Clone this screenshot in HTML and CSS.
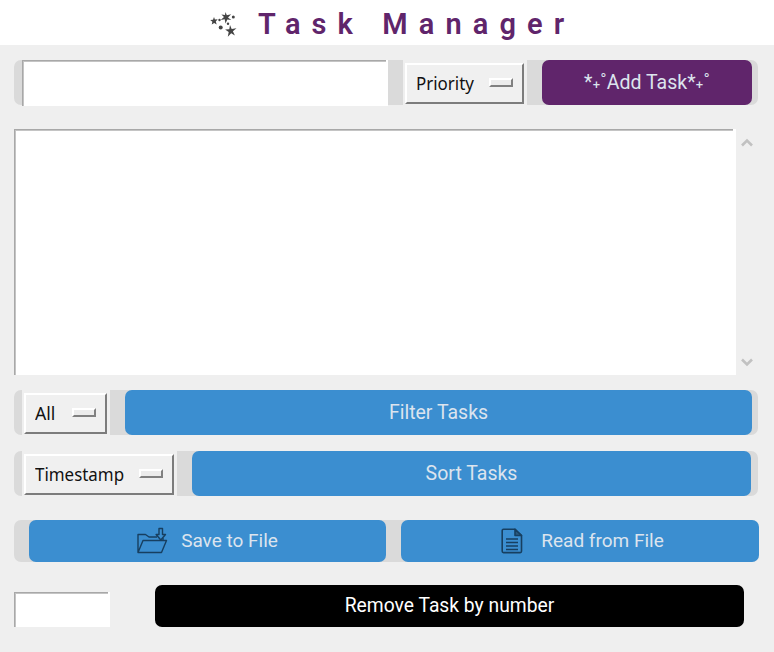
FILE: index.html
```
<!DOCTYPE html>
<html lang="en">
<head>
<meta charset="utf-8">
<title>Task Manager</title>
<link rel="stylesheet" href="styles.css">
</head>
<body>
<header class="header">
  <svg class="stars" width="28" height="28" viewBox="0 0 28 28" fill="#444">
    <path d="M15.500 1l1.300 3.300 4.400-1.100-3.200 3.200 3.300 2.600-4-.6-1.800 4.200-.8-4.300-4 .8 3.300-3-2.600-2.600 3.600.6z"/>
    <path d="M20 14l1.700 4 4.800-.8-3.600 3.100 2 4.300-3.700-2.300-3.400 3.400.9-4.700-3.600-2.400 4.200-.4z"/>
    <path d="M4 6l.9 2.500 2.800-.2-1.900 2.100.9 3-2.500-1.500-2.500 1.700.7-2.900L.2 9l2.800-.3z"/>
    <circle cx="23.300" cy="5.900" r="1.500"/><circle cx="9.500" cy="9" r="1.200"/><circle cx="10.700" cy="16.500" r="2"/><circle cx="18" cy="12.800" r="1.200"/>
  </svg>
  <h1 class="title">Task Manager</h1>
</header>
<main class="main">
  <div class="bar">
    <input class="entry entry-task" aria-label="Task">
    <div class="slot slot-priority"><button class="menu"><span class="label label-priority">Priority</span><i class="knob"></i></button></div>
    <button class="btn add"><span class="spark">*<span class="plus">₊</span>˚</span><span>Add Task</span><span class="spark">*<span class="plus">₊</span>˚</span></button>
  </div>
  <div class="list">
    <div class="listbox"></div>
    <div class="scroll">
      <svg width="12" height="9" viewBox="0 0 12 9"><path d="M1 7.500L6 2.500l5 5" fill="none" stroke="#c1c1c1" stroke-width="2.600"/></svg>
      <svg width="12" height="9" viewBox="0 0 12 9"><path d="M1 1.500l5 5 5-5" fill="none" stroke="#c1c1c1" stroke-width="2.600"/></svg>
    </div>
  </div>
  <div class="bar bar-filter">
    <div class="slot slot-all"><button class="menu"><span class="label label-all">All</span><i class="knob"></i></button></div>
    <button class="btn filter">Filter Tasks</button>
  </div>
  <div class="bar bar-sort">
    <div class="slot slot-time"><button class="menu"><span class="label label-time">Timestamp</span><i class="knob"></i></button></div>
    <button class="btn sort">Sort Tasks</button>
  </div>
  <div class="bar bar-files">
    <button class="btn save">
      <svg width="32" height="28" viewBox="0 0 32 28" fill="none" stroke="#173f60" stroke-width="1.400" stroke-linejoin="round">
        <path d="M2 25.500V7.500h7.500l3.500 2.500h8M27 11v2.500M2 25.500l5-12h23.500l-5 12z"/>
        <path d="M23 1.500h3.500v6h3l-4.700 5.500-4.700-5.500H23z"/>
      </svg>
      <span>Save to File</span>
    </button>
    <button class="btn read">
      <svg width="22" height="26" viewBox="0 0 22 26" fill="none" stroke="#173f60" stroke-width="1.600" stroke-linejoin="round">
        <path d="M2.500 1.200H14l6.500 6.300v15.800a1.300 1.300 0 0 1-1.300 1.300H2.500a1.300 1.300 0 0 1-1.300-1.300V2.500a1.300 1.300 0 0 1 1.300-1.300z"/>
        <path d="M14 1.200v6.300h6.500z" fill="#28597f"/>
        <path d="M5 11h12M5 14.500h12M5 18h12M5 21.500h12"/>
      </svg>
      <span>Read from File</span>
    </button>
  </div>
  <div class="remove-row">
    <input class="entry entry-number" aria-label="Task number">
    <button class="btn remove">Remove Task by number</button>
  </div>
</main>
</body>
</html>
```
FILE: styles.css
```
* { box-sizing: border-box; }
body { margin: 0; background: #efefef; font-family: Roboto, sans-serif; height: 652px; overflow: hidden; }
button { font: inherit; border: 0; padding: 0; margin: 0; }
.header { height: 45px; background: #fff; display: flex; padding-left: 210px; }
.stars { margin-top: 11px; flex: none; }
.title { margin: 0 0 0 20px; font-size: 29px; line-height: 48px; font-weight: 600; letter-spacing: 11.1px; color: #60256b; white-space: nowrap; }
.main { padding: 15px 15px 0 14px; }
.bar { display: flex; width: 744px; height: 45px; background: #dadada; border-radius: 7px; padding-left: 8px; }
.entry { display: block; background: #fff; border: 0; border-right: 2px solid #fff; border-radius: 0; padding: 0 6px; margin: 0; outline: 0; box-shadow: inset 1px 1px #a8a8a8, inset 2px 2px #c4c4c4; }
.entry-task { width: 366px; height: 46px; margin-right: 15px; }
.slot { background: #efefef; height: 46px; padding: 3px 3px 2px 2px; margin-right: 15px; flex: none; }
.slot-priority { width: 124px; }
.slot-all { width: 88px; }
.slot-time { width: 155px; }
.menu { width: 100%; height: 41px; background: #f0f0f0; border: 2px solid; border-color: #fff #7c7c7c #7c7c7c #fff; display: flex; align-items: center; justify-content: space-between; padding: 0 9px; }
.label { font-family: "Noto Sans", sans-serif; font-size: 18px; line-height: 24px; color: #111; transform-origin: left center; white-space: nowrap; text-align: left; margin-top: -1px; }
.label-priority { width: 58px; transform: scaleX(.94); }
.label-all { width: 21px; transform: scaleX(.98); }
.label-time { width: 88px; transform: scaleX(.94); }
.knob { width: 24px; height: 9px; flex: none; background: #ececec; border: 2px solid; border-color: #fff #808080 #808080 #fff; margin-top: -2px; }
.btn { display: flex; align-items: center; justify-content: center; height: 45px; background: #3b8ed0; border-radius: 7px; color: #dce4ee; font-size: 19.500px; line-height: 24px; white-space: nowrap; flex: none; }
.add { width: 210px; background: #60256b; }
.spark { display: flex; }
.plus { position: relative; top: -4px; }
.list { display: flex; margin-top: 24px; height: 246px; }
.listbox { width: 722px; background: #fff; border-right: 3px solid #fff; box-shadow: inset 1px 1px #a8a8a8, inset 2px 2px #c4c4c4; }
.scroll { width: 22px; display: flex; flex-direction: column; align-items: center; justify-content: space-between; padding: 9px 0 8px; }
.bar-filter { margin-top: 15px; }
.filter { width: 627px; }
.bar-sort { margin-top: 16px; }
.sort { width: 559px; }
.bar-files { width: 745px; height: 42px; margin-top: 24px; padding-left: 15px; gap: 15px; }
.bar-files .btn { height: 42px; font-size: 19px; }
.save { width: 357px; gap: 13px; padding-right: 1px; }
.read { width: 358px; gap: 18px; padding-left: 5px; }
.remove-row { display: flex; margin-top: 23px; align-items: flex-end; }
.entry-number { width: 96px; height: 35px; margin-right: 45px; }
.remove-row .remove { width: 589px; height: 42px; background: #000; color: #fff; font-size: 19.300px; }
```
